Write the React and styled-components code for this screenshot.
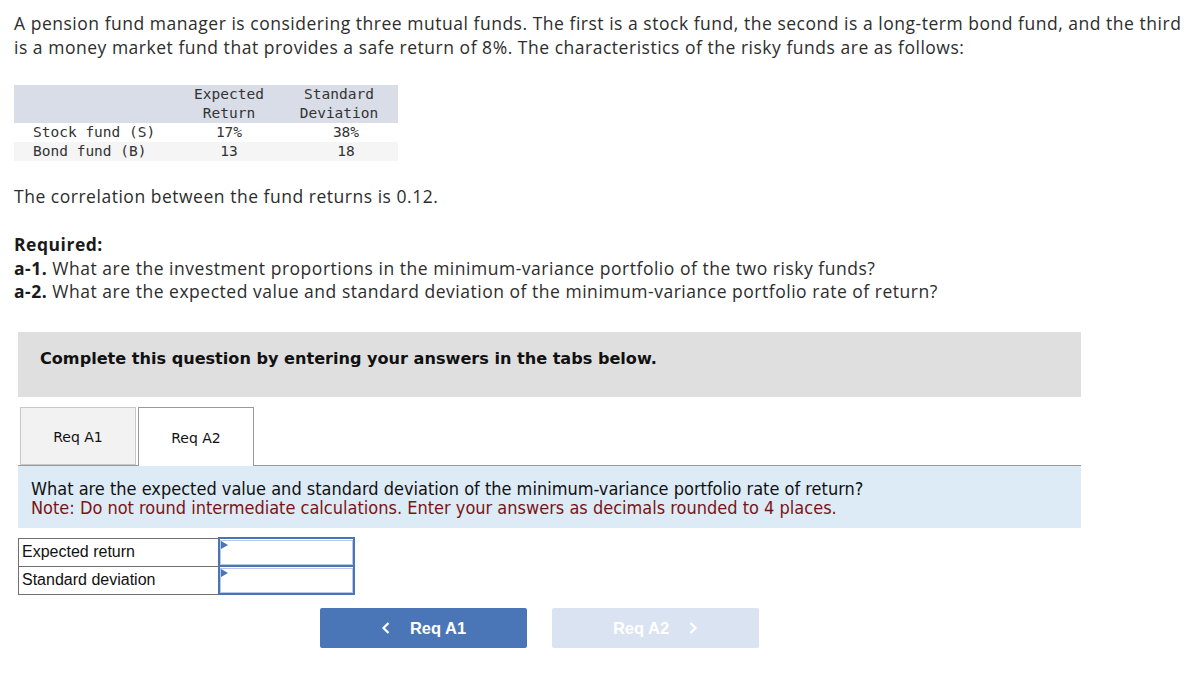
import React from "react";
import styled, { createGlobalStyle } from "styled-components";

const GlobalStyle = createGlobalStyle`
  html, body {
    margin: 0;
    padding: 0;
    background: #fff;
  }
  body {
    font-family: "Open Sans", Lato, sans-serif;
    color: #2d2d2d;
  }
`;

const Page = styled.div`
  padding: 11px 14px 0 14px;
  width: 1197px;
  box-sizing: border-box;
`;

const Para = styled.p`
  margin: 0;
  margin-top: ${(p) => p.$mt || 0}px;
  font-size: 17.5px;
  line-height: ${(p) => p.$lh || 24}px;
  letter-spacing: 0.52px;
  color: #2d2d2d;
  b {
    font-weight: 700;
    color: #1a1a1a;
  }
`;

const DataTable = styled.table`
  border-collapse: collapse;
  margin: 26px 0 0 0;
  font-family: "DejaVu Sans Mono", "Liberation Mono", monospace;
  font-size: 14.5px;
  color: #333;
  width: 384px;
  th {
    background: #d9dde8;
    font-weight: 400;
    line-height: 19px;
    padding: 0;
  }
  td {
    line-height: 19px;
    padding: 0;
    text-align: center;
  }
  td:first-child {
    text-align: left;
    padding-left: 19px;
  }
  th:nth-child(3) {
    padding-left: 6px;
  }
  td:nth-child(3) {
    padding-left: 20px;
  }
  tr.alt td {
    background: #f5f5f5;
  }
`;

const Banner = styled.div`
  margin: 29px 102px 0 4px;
  height: 65px;
  box-sizing: border-box;
  background: #dfdfdf;
  padding: 17px 0 0 22px;
  font-family: "DejaVu Sans", Verdana, sans-serif;
  font-weight: 700;
  font-size: 16.1px;
  line-height: 20px;
  color: #111;
`;

const TabRow = styled.div`
  margin: 10px 102px 0 4px;
  display: flex;
  gap: 2px;
  padding-left: 2px;
  border-bottom: 1px solid #9a9a9a;
  height: 58px;
`;

const Tab = styled.div`
  width: 116px;
  height: ${(p) => (p.$active ? 59 : 58)}px;
  box-sizing: border-box;
  border: 1px solid ${(p) => (p.$active ? "#9a9a9a" : "#c8c8c8")};
  border-bottom: ${(p) => (p.$active ? "none" : "1px solid #c8c8c8")};
  background: ${(p) => (p.$active ? "#fff" : "#f2f2f2")};
  display: flex;
  align-items: center;
  justify-content: center;
  padding-top: 1px;
  font-family: "DejaVu Sans", Tahoma, sans-serif;
  font-size: 14px;
  color: #111;
  position: relative;
  z-index: 1;
`;

const Prompt = styled.div`
  margin: 0 102px 0 4px;
  background: #ddebf7;
  height: 62px;
  box-sizing: border-box;
  padding: 13px 13px 0;
  font-family: "DejaVu Sans Condensed", "DejaVu Sans", sans-serif;
  font-size: 18px;
  line-height: 19px;
  color: #111;
`;

const Note = styled.div`
  color: #7a1414;
`;

const AnswerTable = styled.table`
  margin: 9px 0 0 4px;
  border-collapse: collapse;
  font-family: "Liberation Sans", Arial, sans-serif;
  font-size: 16px;
  color: #111;
  td {
    border: 1px solid #707070;
    height: 28px;
    padding: 0 0 0 3px;
    box-sizing: border-box;
  }
  td.label {
    width: 200px;
  }
  td.input {
    width: 135px;
    padding: 0;
    border: 2px solid #4a74b3;
  }
`;

const InputBox = styled.div`
  position: relative;
  height: 25px;
  border: 1px solid #b6c9e8;
  background: #fff;
  box-sizing: border-box;
  &::before {
    content: "";
    position: absolute;
    left: 0;
    top: 0;
    border-left: 7px solid #4a74b3;
    border-top: 4px solid transparent;
    border-bottom: 4px solid transparent;
  }
`;

const NavRow = styled.div`
  display: flex;
  gap: 25px;
  margin: 13px 0 0 306px;
`;

const NavButton = styled.div`
  width: 207px;
  height: 40px;
  border-radius: 2px;
  background: ${(p) => (p.$disabled ? "#dae3f1" : "#4a76b8")};
  color: #fff;
  display: flex;
  align-items: center;
  justify-content: center;
  gap: 19px;
  font-family: "Liberation Sans", Arial, sans-serif;
  font-weight: 700;
  font-size: 16.5px;
  svg {
    display: block;
  }
`;

const Chevron = ({ dir }) => (
  <svg width="10" height="14" viewBox="0 0 10 14">
    <path
      d={dir === "left" ? "M7.5 2 L2.5 7 L7.5 12" : "M2.5 2 L7.5 7 L2.5 12"}
      fill="none"
      stroke="#fff"
      strokeWidth="2.2"
    />
  </svg>
);

export default function App() {
  return (
    <>
      <GlobalStyle />
      <Page>
        <Para>
          A pension fund manager is considering three mutual funds. The first is a stock fund, the
          second is a long-term bond fund, and the third is a money market fund that provides a safe
          return of 8%. The characteristics of the risky funds are as follows:
        </Para>
        <DataTable>
          <thead>
            <tr>
              <th style={{ width: 170 }}></th>
              <th style={{ width: 90 }}>
                Expected
                <br />
                Return
              </th>
              <th>
                Standard
                <br />
                Deviation
              </th>
            </tr>
          </thead>
          <tbody>
            <tr>
              <td>Stock fund (S)</td>
              <td>17%</td>
              <td>38%</td>
            </tr>
            <tr className="alt">
              <td>Bond fund (B)</td>
              <td>13</td>
              <td>18</td>
            </tr>
          </tbody>
        </DataTable>
        <Para $mt={23}>The correlation between the fund returns is 0.12.</Para>
        <Para $mt={24}>
          <b>Required:</b>
        </Para>
        <Para>
          <b>a-1.</b> What are the investment proportions in the minimum-variance portfolio of the
          two risky funds?
        </Para>
        <Para $lh={23}>
          <b>a-2.</b> What are the expected value and standard deviation of the minimum-variance
          portfolio rate of return?
        </Para>
        <Banner>Complete this question by entering your answers in the tabs below.</Banner>
        <TabRow>
          <Tab>Req A1</Tab>
          <Tab $active>Req A2</Tab>
        </TabRow>
        <Prompt>
          What are the expected value and standard deviation of the minimum-variance portfolio rate
          of return?
          <Note>
            Note: Do not round intermediate calculations. Enter your answers as decimals rounded to 4
            places.
          </Note>
        </Prompt>
        <AnswerTable>
          <tbody>
            <tr>
              <td className="label">Expected return</td>
              <td className="input">
                <InputBox />
              </td>
            </tr>
            <tr>
              <td className="label">Standard deviation</td>
              <td className="input">
                <InputBox />
              </td>
            </tr>
          </tbody>
        </AnswerTable>
        <NavRow>
          <NavButton>
            <Chevron dir="left" />
            Req A1
          </NavButton>
          <NavButton $disabled>
            Req A2
            <Chevron dir="right" />
          </NavButton>
        </NavRow>
      </Page>
    </>
  );
}
